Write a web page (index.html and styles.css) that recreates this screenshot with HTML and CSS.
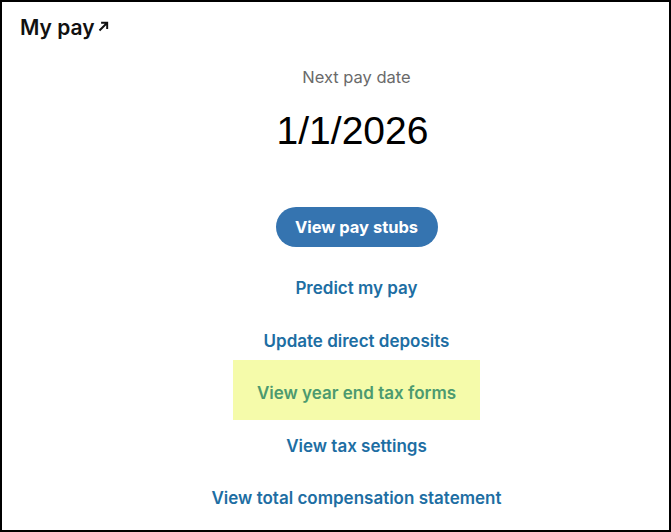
FILE: index.html
```html
<!DOCTYPE html>
<html lang="en">
<head>
<meta charset="utf-8">
<title>My pay</title>
<link rel="stylesheet" href="styles.css">
</head>
<body>
<section class="card">
  <h2 class="card-title">My pay<svg class="ext" width="13" height="13" viewBox="0 0 12 12" aria-hidden="true"><path d="M2.3 9.7 L9 3 M3.8 2.6 H9.4 V8.2" fill="none" stroke="#111" stroke-width="1.8"/></svg></h2>
  <div class="content">
    <div class="label">Next pay date</div>
    <div class="date">1/1/2026</div>
    <button class="primary">View pay stubs</button>
    <nav class="links">
      <a class="link">Predict my pay</a>
      <a class="link">Update direct deposits</a>
      <a class="link highlight">View year end tax forms</a>
      <a class="link">View tax settings</a>
      <a class="link">View total compensation statement</a>
    </nav>
  </div>
</section>
</body>
</html>
```
FILE: styles.css
```css
html, body {
  margin: 0;
  padding: 0;
  background: #fff;
}
.card {
  box-sizing: border-box;
  width: 671px;
  height: 532px;
  border: 2px solid #000;
  font-family: Inter, "Noto Sans", sans-serif;
  display: flex;
  flex-direction: column;
}
.card-title {
  margin: 0;
  padding: 14px 0 0 18px;
  font-size: 21px;
  font-weight: 600;
  color: #111;
  line-height: 24px;
  display: flex;
  align-items: center;
}
.ext {
  margin-left: 2px;
  margin-top: -4px;
}
.content {
  display: flex;
  flex-direction: column;
  align-items: center;
  padding-left: 42px;
}
.label {
  margin-top: 27px;
  font-size: 16.5px;
  color: #6a6a6a;
  line-height: 20px;
}
.date {
  margin-top: 22px;
  padding-right: 8px;
  font-family: "Liberation Sans", Arial, sans-serif;
  font-size: 39px;
  line-height: 44px;
  color: #000;
}
.primary {
  margin-top: 54px;
  width: 162px;
  height: 40px;
  border: none;
  border-radius: 20px;
  background: #3574b0;
  color: #fff;
  font-family: inherit;
  font-size: 16.5px;
  font-weight: 700;
  padding: 0;
}
.links {
  display: flex;
  flex-direction: column;
  align-items: center;
  margin-top: 15px;
}
.link {
  display: flex;
  align-items: center;
  justify-content: center;
  height: 52.5px;
  font-size: 17px;
  font-weight: 600;
  color: #1d6ea3;
}
.highlight {
  box-sizing: border-box;
  width: 247px;
  height: 60px;
  margin: -6.75px 0 -0.75px;
  padding-top: 5px;
  background: #f5fbaa;
  color: #4c9a6f;
}
```
